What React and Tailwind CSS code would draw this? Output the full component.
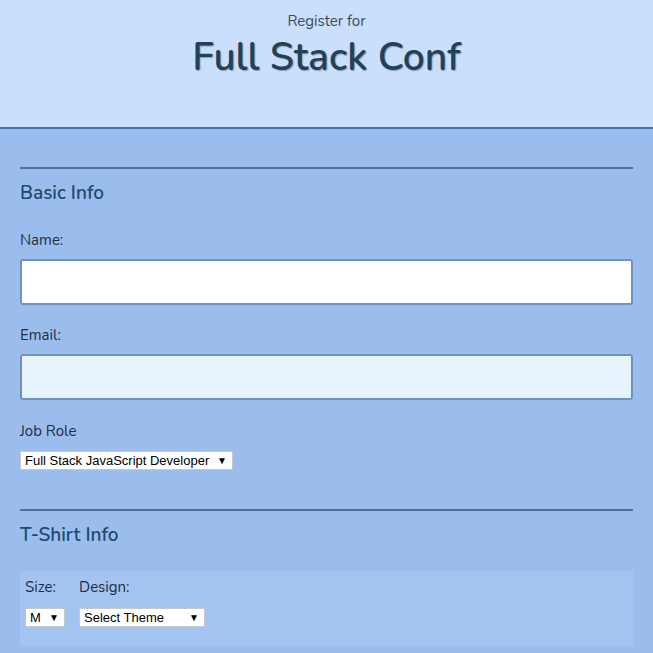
import React from 'react';

// Flat select look-alike: label text plus the small ▼ arrow
const FakeSelect = ({ value, width }) => (
  <div
    className={`${width} h-[19px] flex items-center justify-between bg-white border border-[#c8c8c8] pl-[4px] pr-[5px] text-[13px] leading-[17px] text-black`}
    style={{ fontFamily: '"Liberation Sans", Arial, sans-serif' }}
  >
    <span className="whitespace-nowrap">{value}</span>
    <span className="text-[10px] leading-[12px] ml-[4px]">▼</span>
  </div>
);

const App = () => {
  const font = { fontFamily: 'Nunito, Lato, "Open Sans", sans-serif' };
  const labelStyles = "block text-[15px] leading-[20px] text-[#1f2d44]";
  const inputStyles = "block w-full h-[46px] border-2 border-[#6f94b8] rounded-[3px] outline-none";

  return (
    <div className="min-h-screen bg-[#9bbdee]" style={font}>
      {/* Header */}
      <header className="h-[129px] bg-[#cadffb] border-b-2 border-[#4b73a7] text-center">
        <p className="pt-[11px] text-[15px] leading-[20px] text-[#3d4b5b]">Register for</p>
        <h1 className="mt-[3px] text-[39px] leading-[48px] font-semibold text-[#1f4259] [text-shadow:1px_1px_1px_rgba(0,0,0,0.3)]">
          Full Stack Conf
        </h1>
      </header>

      <main className="px-5 pt-[38px] pb-[20px]">
        <form>
          {/* Basic Info */}
          <fieldset className="border-t-2 border-[#4a709e]">
            <h2 className="mt-[12px] text-[19px] leading-[24px] font-semibold text-[#1e4a6c]">Basic Info</h2>

            <label className={`${labelStyles} mt-[25px]`}>Name:</label>
            <input type="text" className={`${inputStyles} mt-[9px] bg-white`} />

            <label className={`${labelStyles} mt-[20px]`}>Email:</label>
            <input type="email" className={`${inputStyles} mt-[9px] bg-[#e8f4fc]`} />

            <label className={`${labelStyles} mt-[21px]`}>Job Role</label>
            <div className="mt-[10px]">
              <FakeSelect width="w-[213px]" value="Full Stack JavaScript Developer" />
            </div>
          </fieldset>

          {/* T-Shirt Info */}
          <fieldset className="mt-[39px] border-t-2 border-[#4a709e]">
            <h2 className="mt-[12px] text-[19px] leading-[24px] font-semibold text-[#1e4a6c]">T-Shirt Info</h2>

            <div className="mt-[24px] h-[75px] bg-[#a3c4f0] pl-[5px] pt-[6px] flex gap-[14px]">
              <div>
                <label className={labelStyles}>Size:</label>
                <div className="mt-[11px]">
                  <FakeSelect width="w-[40px]" value="M" />
                </div>
              </div>
              <div>
                <label className={labelStyles}>Design:</label>
                <div className="mt-[11px]">
                  <FakeSelect width="w-[126px]" value="Select Theme" />
                </div>
              </div>
            </div>
          </fieldset>
        </form>
      </main>
    </div>
  );
};

export default App;
